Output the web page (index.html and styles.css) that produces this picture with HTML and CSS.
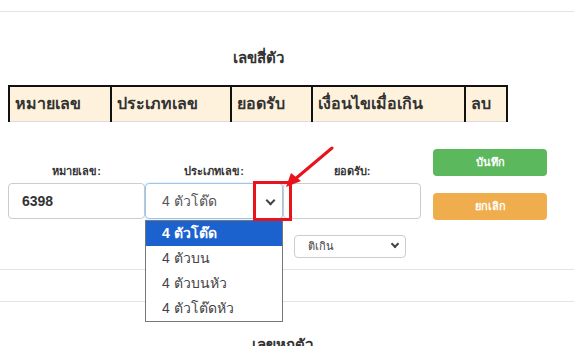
FILE: index.html
```html
<!DOCTYPE html>
<html>
<head lang="th">
    <meta charset="UTF-8">
    <title>เลขสี่ตัว</title>
    <link rel="stylesheet" href="styles.css">
</head>
<body>
    <div class="topline"></div>
    <div id="four">
        <h3 class="caption">เลขสี่ตัว</h3>
        <table class="list">
            <tr>
                <th class="c1">หมายเลข</th>
                <th class="c2">ประเภทเลข</th>
                <th class="c3">ยอดรับ</th>
                <th class="c4">เงื่อนไขเมื่อเกิน</th>
                <th class="c5">ลบ</th>
            </tr>
        </table>
        <div class="form">
            <div class="field">
                <label>หมายเลข:</label>
                <div class="box num">6398</div>
            </div>
            <div class="field">
                <label>ประเภทเลข:</label>
                <div class="box select focus">4 ตัวโต๊ด<span class="arrow"></span></div>
                <ul class="popup">
                    <li class="on">4 ตัวโต๊ด</li>
                    <li>4 ตัวบน</li>
                    <li>4 ตัวบนหัว</li>
                    <li>4 ตัวโต๊ดหัว</li>
                </ul>
                <div class="mark"></div>
                <svg class="pointer" width="60" height="50" viewBox="0 0 60 50">
                    <line x1="50" y1="2" x2="12" y2="34" stroke="#e8141b" stroke-width="3" stroke-linecap="round"/>
                    <polygon points="4,41 9,27 19,35" fill="#e8141b"/>
                </svg>
            </div>
            <div class="field">
                <label>ยอดรับ:</label>
                <div class="box"></div>
                <div class="small">ติเกิน<span class="arrow"></span></div>
            </div>
            <div class="buttons">
                <span class="btn save">บันทึก</span>
                <span class="btn cancel">ยกเลิก</span>
            </div>
        </div>
    </div>
    <div class="line first"></div>
    <div class="line"></div>
    <h3 class="caption next">เลขหกตัว</h3>
</body>
</html>
```

FILE: styles.css
```css
*{padding:0;margin:0;box-sizing:border-box;}
body{font-family:"Liberation Sans",Tahoma,sans-serif;color:#333;background:#fff;width:574px;height:346px;overflow:hidden;}
li{list-style:none;}
.topline{height:1px;background:#e3e3e3;margin-top:11px;}
#four{width:500px;margin-left:8px;}
.caption{font-size:15px;font-weight:bold;text-align:center;height:20px;line-height:20px;margin-top:36px;color:#333;}
.list{border-collapse:collapse;margin-top:17px;width:500px;table-layout:fixed;}
.list th{background:#fff2dc;height:35px;text-align:left;padding-left:5px;font-size:16px;color:#333;
border-left:2px solid #111;border-top:2px solid #111;border-bottom:1px solid #ddd;white-space:nowrap;}
.list .c5{border-right:2px solid #111;}
.c1{width:102px;}
.c2{width:120px;}
.c3{width:81px;}
.c4{width:153px;}
.form{display:flex;margin-top:29px;position:relative;width:560px;}
.field{width:138px;flex-shrink:0;padding-top:13px;position:relative;}
.field:first-child{width:137px;}
.field label{display:block;text-align:center;font-size:11px;font-weight:bold;height:14px;line-height:14px;margin-bottom:5px;}
.box{height:36px;border:1px solid #ccc;border-radius:4px;line-height:34px;padding-left:13px;font-size:14px;color:#555;position:relative;}
.box.num{font-weight:bold;color:#333;}
.box.select{padding-left:16px;}
.box.focus{border-color:#9ec4ea;box-shadow:0 0 2px rgba(102,175,233,.5);}
.arrow{position:absolute;right:8px;top:13px;width:7px;height:7px;border-right:2px solid #444;border-bottom:2px solid #444;transform:rotate(45deg);}
.small{margin:16px 0 0 11px;width:112px;height:23px;border:1px solid #ccc;border-radius:4px;font-size:11px;line-height:21px;padding-left:13px;position:relative;color:#444;}
.small .arrow{top:5px;right:7px;width:6px;height:6px;}
.buttons{margin-left:12px;margin-top:-2px;flex-shrink:0;display:flex;flex-direction:column;gap:17px;}
.btn{display:block;width:114px;height:27px;line-height:27px;border-radius:4px;text-align:center;color:#fff;font-size:11px;font-weight:bold;}
.save{background:#5cb85c;}
.cancel{background:#f0ad4e;}
.popup{position:absolute;left:0;top:69px;width:138px;border:1px solid #777;background:#fff;z-index:3;}
.popup li{height:25px;line-height:25px;padding-left:16px;font-size:14px;color:#444;}
.popup li.on{background:#1c62cf;color:#fff;font-weight:bold;}
.mark{position:absolute;left:108px;top:30px;width:39px;height:40px;border:3px solid #e8141b;z-index:4;}
.pointer{position:absolute;left:137px;top:-5px;z-index:5;}
.line{height:1px;background:#e3e3e3;margin-top:31px;}
.line.first{margin-top:11px;}
.caption.next{margin-top:33px;padding-right:10px;}
```
